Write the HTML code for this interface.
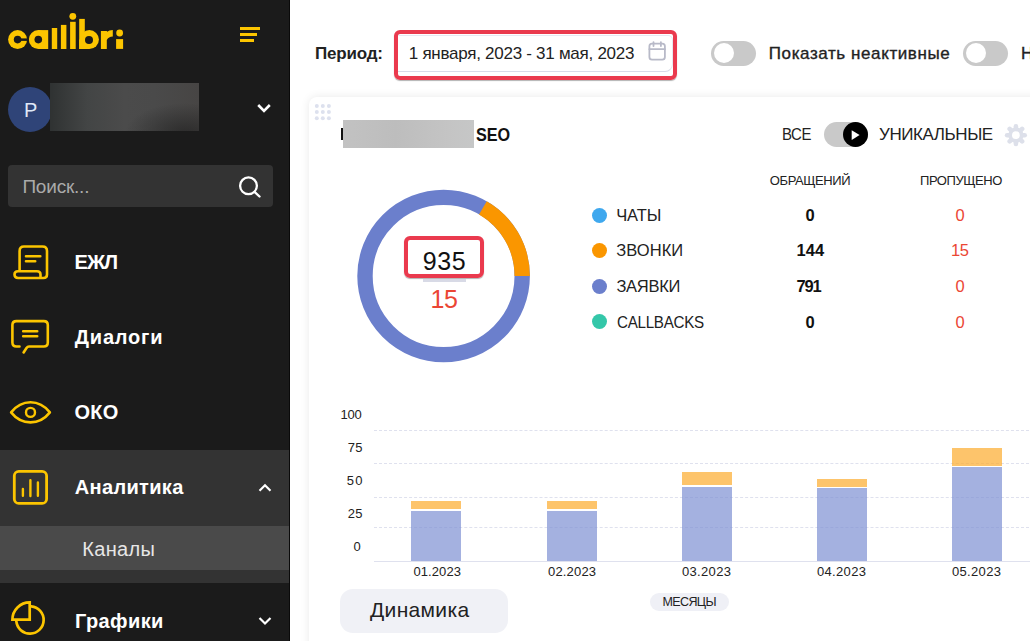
<!DOCTYPE html>
<html><head><meta charset="utf-8">
<style>
*{margin:0;padding:0;box-sizing:border-box}
html,body{width:1030px;height:641px;overflow:hidden;background:#fff;font-family:"Liberation Sans",sans-serif}
.abs{position:absolute}
#sb{position:absolute;left:0;top:0;width:290px;height:641px;background:#1b1b1b}
#sbshadow{position:absolute;left:289px;top:0;width:1px;height:641px;background:#0a0a0a}
.t{position:absolute;white-space:nowrap;line-height:1}
.nav{color:#fff;font-weight:bold;font-size:20px}
.ic{position:absolute;fill:none;stroke:#fcc500;stroke-linecap:round;stroke-linejoin:round}
.tog{position:absolute;border-radius:13px;background:#c9c9c9}
.knob{position:absolute;border-radius:50%;background:#fff}
.lg{position:absolute;width:15px;height:15px;border-radius:50%}
.lt{font-size:16.5px;color:#222}
.num{font-size:16.5px;font-weight:bold;color:#111}
.red{font-size:16.5px;color:#eb4634}
.yl{font-size:13px;color:#222}
.gl{position:absolute;left:374px;width:660px;height:0;border-top:1px dashed #dfe1ee}
.bo{position:absolute;background:rgba(252,171,44,.7)}
.bb{position:absolute;background:rgba(126,144,211,.7)}
.xl{font-size:13px;color:#222}
</style></head><body>
<div id="sb">
  <!-- logo -->
  <svg class="abs" style="left:0;top:0" width="130" height="55" viewBox="0 0 130 55">
    <g fill="#fcc500">
      <circle cx="17.6" cy="39.6" r="9.5"/>
      <circle cx="38.3" cy="39.6" r="9.5"/>
      <rect x="38.3" y="30.1" width="9.9" height="18.9"/>
      <rect x="51.8" y="28" width="5.4" height="21"/>
      <rect x="60.9" y="24.9" width="5.5" height="24.1"/>
      <rect x="70.1" y="21.8" width="5.6" height="27.2"/>
      <circle cx="72.8" cy="16.3" r="3.4"/>
      <rect x="79.2" y="18.9" width="5.6" height="30.1"/>
      <circle cx="89.4" cy="39.6" r="9.5"/>
      <rect x="79.2" y="39.6" width="10" height="9.4"/>
      <path d="M100.9 48.9 V30.9 H106.8 L107.2 31.8 Q109 30.3 112.8 30.1 V36.4 Q108.5 36.4 106.8 40 V48.9 Z"/>
      <circle cx="119.65" cy="33" r="3.4"/>
      <rect x="116.1" y="39.1" width="7" height="9.8"/>
    </g>
    <g fill="#1b1b1b">
      <circle cx="17.6" cy="39.6" r="3.8"/>
      <rect x="19" y="38.4" width="10" height="2.5"/>
      <circle cx="38.3" cy="39.6" r="3.8"/>
      <circle cx="89" cy="39.9" r="4"/>
    </g>
  </svg>
  <!-- hamburger -->
  <div class="abs" style="left:240px;top:27px;width:20px;height:3px;background:#fcc500"></div>
  <div class="abs" style="left:240px;top:33px;width:17px;height:3px;background:#fcc500"></div>
  <div class="abs" style="left:240px;top:39px;width:14px;height:3px;background:#fcc500"></div>
  <!-- user -->
  <div class="abs" style="left:8px;top:87px;width:44px;height:45px;border-radius:50%;background:#2f4478"></div>
  <div id="t1" class="t" style="left:24.0px;top:100px;font-size:20px;color:#dfe8f7;letter-spacing:0.00px">P</div>
  <div class="abs" style="left:50px;top:83px;width:149px;height:48px;background:radial-gradient(ellipse 60px 30px at 135px 50px,rgba(30,30,30,.65),rgba(30,30,30,0)),linear-gradient(90deg,#2f3232 0%,#434545 25%,#4b4b4b 50%,#4a4a4a 70%,#474544 100%)"></div>
  <svg class="abs" style="left:256px;top:102px" width="16" height="14" viewBox="0 0 16 14"><path d="M2.2 3 L8 8.8 L13.8 3" stroke="#fff" stroke-width="2.6" fill="none"/></svg>
  <!-- search -->
  <div class="abs" style="left:8px;top:165px;width:265px;height:42px;border-radius:4px;background:#333"></div>
  <div id="t2" class="t" style="left:22.4px;top:177px;font-size:19px;color:#aaa;letter-spacing:-0.20px">Поиск...</div>
  <svg class="abs" style="left:230px;top:170px" width="40" height="34" viewBox="0 0 40 34"><circle cx="18.5" cy="15.8" r="8.4" stroke="#fff" stroke-width="2.3" fill="none"/><path d="M24.5 21.8 L29.5 26.5" stroke="#fff" stroke-width="2.4" stroke-linecap="round"/></svg>
  <!-- nav icons -->
  <svg class="ic" style="left:5px;top:238px" width="50" height="50" viewBox="0 0 50 50" stroke-width="2.6">
    <path d="M14.6 33.3 V13 Q14.6 8.5 19 8.5 H37.5 Q42 8.5 42 13 V36.5 Q42 40 38.5 40 H13 Q9.5 40 9.5 36.6 Q9.5 33.3 13 33.3 H32 Q35.5 33.3 35.5 36.6 V40"/>
    <path d="M21 18.3 H35.3 M21 23.2 H30.2"/>
  </svg>
  <svg class="ic" style="left:5px;top:312px" width="50" height="50" viewBox="0 0 50 50" stroke-width="2.6">
    <path d="M14.5 34.5 H11.4 Q7.4 34.5 7.4 30.5 V13.1 Q7.4 9.1 11.4 9.1 H38.8 Q42.8 9.1 42.8 13.1 V30.5 Q42.8 34.5 38.8 34.5 H24 Q22.5 34.5 21.5 36 L18.6 40.5"/>
    <path d="M18.2 19.3 H32.2 M18.2 24.3 H32.2"/>
  </svg>
  <svg class="ic" style="left:5px;top:387px" width="50" height="50" viewBox="0 0 50 50" stroke-width="2.6">
    <path d="M6.1 25.4 C12 18 19 15.3 25.5 15.3 C32 15.3 39 18 44.9 25.4 C39 32.8 32 35.4 25.5 35.4 C19 35.4 12 32.8 6.1 25.4Z"/>
    <circle cx="25.5" cy="25.4" r="4.5" stroke-width="2.4"/>
  </svg>
  <!-- nav -->
  <div id="t3" class="t nav" style="left:74.6px;top:252px;letter-spacing:-1.00px">ЕЖЛ</div>
  <div id="t4" class="t nav" style="left:74.8px;top:327px;letter-spacing:0.80px">Диалоги</div>
  <div id="t5" class="t nav" style="left:74.6px;top:402px;letter-spacing:0.20px">ОКО</div>
  <div class="abs" style="left:0;top:450px;width:290px;height:133px;background:#333"></div>
  <svg class="ic" style="left:5px;top:462px" width="50" height="50" viewBox="0 0 50 50" stroke-width="2.8">
    <rect x="9.3" y="9.3" width="32.3" height="32.1" rx="4.5"/>
    <path d="M17.9 27 V33.8 M25.4 18.2 V34.1 M32.9 20.5 V33.8" stroke-width="2.4"/>
  </svg>
  <div id="t6" class="t nav" style="left:74.8px;top:477px;letter-spacing:0.33px">Аналитика</div>
  <svg class="abs" style="left:257.3px;top:479.5px" width="16" height="14" viewBox="0 0 16 14"><path d="M2.5 10.8 L8 5.3 L13.5 10.8" stroke="#fff" stroke-width="2.2" fill="none"/></svg>
  <div class="abs" style="left:0;top:526px;width:290px;height:44px;background:#4a4a4a"></div>
  <div id="t7" class="t" style="left:82.2px;top:539px;font-size:20px;color:#e6e6e6;letter-spacing:0.36px">Каналы</div>
  <svg class="ic" style="left:5px;top:595px" width="50" height="46" viewBox="0 0 50 46" stroke-width="2.7">
    <path d="M26.2 11.3 A13.7 13.7 0 1 1 11.3 26.2"/>
    <path d="M24.7 7.4 V24.7 H7.4 A17.3 17.3 0 0 1 24.7 7.4 Z" stroke-linejoin="miter"/>
  </svg>
  <div id="t8" class="t nav" style="left:75.0px;top:611px;letter-spacing:0.40px">Графики</div>
  <svg class="abs" style="left:257.3px;top:613.5px" width="16" height="14" viewBox="0 0 16 14"><path d="M2.5 4 L8 9.5 L13.5 4" stroke="#fff" stroke-width="2.2" fill="none"/></svg>
</div>
<div id="sbshadow"></div>

<!-- top bar -->
<div id="t9" class="t" style="left:315.0px;top:45px;font-size:17px;font-weight:bold;color:#222;letter-spacing:-0.20px">Период:</div>
<div class="abs" style="left:394px;top:30px;width:283px;height:50px;border:4px solid #ea3a4e;border-radius:6px;box-shadow:0 1px 1px rgba(0,0,0,.3)"></div>
<div class="abs" style="left:398px;top:35px;width:275px;height:37px;border-top:1px solid #e6e8f2;border-bottom:1px solid #d8dbe8;border-right:1px solid #e6e8f0;border-radius:0 5px 8px 0"></div>
<div id="t10" class="t" style="left:408.8px;top:45px;font-size:17px;color:#222;letter-spacing:-0.27px">1 января, 2023 - 31 мая, 2023</div>
<svg class="abs" style="left:646px;top:39px" width="22" height="24" viewBox="0 0 22 24" fill="none" stroke="#b8bac8" stroke-width="1.8">
  <rect x="3.4" y="4.6" width="15.5" height="16.1" rx="2.6"/>
  <path d="M3.4 10.2 H18.9 M7.5 3.1 V7.1 M14.9 3.1 V7.1" stroke-linecap="round"/>
</svg>
<!-- toggles -->
<div id="t11" class="tog" style="left:711px;top:41px;width:45px;height:25px;letter-spacing:0px"></div>
<div class="knob" style="left:713.5px;top:42.7px;width:20.5px;height:20.5px"></div>
<div id="t12" class="t" style="left:768.8px;top:45px;font-size:17px;font-weight:normal;color:#222;letter-spacing:0.59px;-webkit-text-stroke:0.35px #222">Показать неактивные</div>
<div id="t13" class="tog" style="left:963px;top:41px;width:45px;height:25px;letter-spacing:0px"></div>
<div class="knob" style="left:965.5px;top:42.7px;width:20.5px;height:20.5px"></div>
<div id="t14" class="t" style="left:1021.0px;top:45px;font-size:17px;font-weight:normal;color:#222;letter-spacing:0.00px;-webkit-text-stroke:0.35px #222">Н</div>

<!-- card -->
<div class="abs" style="left:308.5px;top:96.5px;width:760px;height:600px;border-radius:8px;background:#fff;box-shadow:0 0 10px rgba(0,0,0,.09)"></div>
<svg class="abs" style="left:312px;top:101px" width="22" height="22" viewBox="0 0 22 22" fill="#dde1ee">
  <circle cx="4.8" cy="4.9" r="2"/><circle cx="10.8" cy="4.9" r="2"/><circle cx="16.9" cy="4.9" r="2"/>
  <circle cx="4.8" cy="10.9" r="2"/><circle cx="10.8" cy="10.9" r="2"/><circle cx="16.9" cy="10.9" r="2"/>
  <circle cx="4.8" cy="17.2" r="2"/><circle cx="10.8" cy="17.2" r="2"/><circle cx="16.9" cy="17.2" r="2"/>
</svg>
<div class="abs" style="left:341px;top:128px;width:2px;height:12px;background:#111"></div>
<div class="abs" style="left:343px;top:120px;width:131px;height:28px;background:linear-gradient(90deg,#c2c2c2,#bdbdbd 40%,#c4c4c4 80%,#c6c7c7)"></div>
<div id="t15" class="t" style="left:476.4px;top:126px;font-size:18px;font-weight:bold;color:#111;letter-spacing:0.00px;transform:scaleX(0.9);transform-origin:0 0">SEO</div>

<div id="t16" class="t lt" style="left:782.0px;top:126px;letter-spacing:-0.50px;font-size:17px;transform:scaleX(0.88);transform-origin:0 0">ВСЕ</div>
<div id="t17" class="tog" style="left:824px;top:122px;width:44px;height:25px;border-radius:12.5px;letter-spacing:0px"></div>
<div class="abs" style="left:843px;top:122px;width:25px;height:25px;border-radius:50%;background:#000"></div>
<svg class="abs" style="left:850px;top:129px" width="12" height="12" viewBox="0 0 12 12"><path d="M1.7 1.3 L9.6 6 L1.7 10.9 Z" fill="#fff"/></svg>
<div id="t18" class="t lt" style="left:879.0px;top:126px;letter-spacing:-0.42px;font-size:17px">УНИКАЛЬНЫЕ</div>
<svg class="abs" style="left:1004px;top:123px" width="24" height="24" viewBox="0 0 24 24">
  <g fill="#dde0ea" transform="translate(11.9 12.2)">
    <circle r="7.6"/>
    <rect x="-2.3" y="-11.1" width="4.6" height="22.2" rx="2.3"/>
    <rect x="-2.3" y="-11.1" width="4.6" height="22.2" rx="2.3" transform="rotate(45)"/>
    <rect x="-2.3" y="-11.1" width="4.6" height="22.2" rx="2.3" transform="rotate(90)"/>
    <rect x="-2.3" y="-11.1" width="4.6" height="22.2" rx="2.3" transform="rotate(135)"/>
  </g>
  <circle cx="11.9" cy="12.2" r="3.85" fill="#fff"/>
</svg>

<div id="t19" class="t" style="left:769.8px;top:174px;font-size:13px;color:#222;letter-spacing:-0.40px">ОБРАЩЕНИЙ</div>
<div id="t20" class="t" style="left:920.0px;top:174px;font-size:13px;color:#222;letter-spacing:-0.43px">ПРОПУЩЕНО</div>

<!-- donut -->
<svg class="abs" style="left:350px;top:182px" width="190" height="190" viewBox="0 0 190 190">
  <g transform="translate(93.6 94)">
    <circle r="78.6" fill="none" stroke="#6b7fcc" stroke-width="15.4"/>
    <path d="M39.3 -68.07 A78.6 78.6 0 0 1 78.6 0" fill="none" stroke="#fa9600" stroke-width="15.4"/>
  </g>
</svg>
<div class="abs" style="left:404.2px;top:236px;width:79.6px;height:41.5px;border:4px solid #ea3a4e;border-radius:6px;box-shadow:0 1px 1px rgba(0,0,0,.3)"></div>
<div class="abs" style="left:423px;top:279px;width:43px;height:2.5px;background:#d8dae6"></div>
<div id="t21" class="t" style="left:422.8px;top:249px;font-size:25px;color:#111;letter-spacing:0.60px">935</div>
<div id="t22" class="t" style="left:430.6px;top:287px;font-size:25px;color:#eb4634;letter-spacing:-0.60px">15</div>

<!-- legend -->
<div class="lg" style="left:592px;top:207.5px;background:#3fa8ee"></div>
<div class="lg" style="left:592px;top:243.3px;background:#fa9600"></div>
<div class="lg" style="left:592px;top:279.4px;background:#6b7fcc"></div>
<div class="lg" style="left:592px;top:314px;background:#34c7a9"></div>
<div id="t23" class="t lt" style="left:616.2px;top:207px;letter-spacing:-0.06px">ЧАТЫ</div>
<div id="t24" class="t lt" style="left:616.2px;top:242px;letter-spacing:0.08px">ЗВОНКИ</div>
<div id="t25" class="t lt" style="left:616.4px;top:278px;letter-spacing:-0.28px">ЗАЯВКИ</div>
<div id="t26" class="t lt" style="left:617.0px;top:314px;letter-spacing:-0.30px;transform:scaleX(0.92);transform-origin:0 0">CALLBACKS</div>
<div id="t27" class="t num" style="left:805.4px;top:207px;letter-spacing:0.00px">0</div>
<div id="t28" class="t num" style="left:796.6px;top:242px;letter-spacing:0.00px">144</div>
<div id="t29" class="t num" style="left:796.6px;top:278px;letter-spacing:-1.20px">791</div>
<div id="t30" class="t num" style="left:805.4px;top:314px;letter-spacing:0.00px">0</div>
<div id="t31" class="t red" style="left:955.4px;top:207px;letter-spacing:0.00px">0</div>
<div id="t32" class="t red" style="left:951.0px;top:242px;letter-spacing:-0.40px">15</div>
<div id="t33" class="t red" style="left:955.4px;top:278px;letter-spacing:0.00px">0</div>
<div id="t34" class="t red" style="left:955.4px;top:314px;letter-spacing:0.00px">0</div>

<!-- chart -->
<div id="t35" class="t yl" style="left:340.6px;top:408px;letter-spacing:-0.30px">100</div>
<div id="t36" class="t yl" style="left:347.8px;top:441px;letter-spacing:0.20px">75</div>
<div id="t37" class="t yl" style="left:346.8px;top:474px;letter-spacing:1.20px">50</div>
<div id="t38" class="t yl" style="left:347.8px;top:507px;letter-spacing:0.20px">25</div>
<div id="t39" class="t yl" style="left:353.6px;top:540px;letter-spacing:0.00px">0</div>
<div class="gl" style="top:430px"></div>
<div class="gl" style="top:463px"></div>
<div class="gl" style="top:497px"></div>
<div class="gl" style="top:527px"></div>
<div class="abs" style="left:374px;top:561px;width:660px;height:1px;background:#dfe1ee"></div>

<div class="bo" style="left:411px;top:500.5px;width:50px;height:8.5px"></div>
<div class="bb" style="left:411px;top:510.6px;width:50px;height:50.4px"></div>
<div class="bo" style="left:547px;top:500.5px;width:50px;height:8.5px"></div>
<div class="bb" style="left:547px;top:510.6px;width:50px;height:50.4px"></div>
<div class="bo" style="left:682px;top:471.5px;width:50px;height:13.5px"></div>
<div class="bb" style="left:682px;top:486.7px;width:50px;height:74.3px"></div>
<div class="bo" style="left:817px;top:479px;width:50px;height:8px"></div>
<div class="bb" style="left:817px;top:487.5px;width:50px;height:73.5px"></div>
<div class="bo" style="left:952px;top:448px;width:50px;height:18px"></div>
<div class="bb" style="left:952px;top:466.8px;width:50px;height:94.2px"></div>

<div id="t40" class="t xl" style="left:413.4px;top:565px;letter-spacing:0.10px">01.2023</div>
<div id="t41" class="t xl" style="left:548.0px;top:565px;letter-spacing:0.17px">02.2023</div>
<div id="t42" class="t xl" style="left:682.0px;top:565px;letter-spacing:0.33px">03.2023</div>
<div id="t43" class="t xl" style="left:817.0px;top:565px;letter-spacing:0.33px">04.2023</div>
<div id="t44" class="t xl" style="left:952.0px;top:565px;letter-spacing:0.33px">05.2023</div>

<div class="abs" style="left:340px;top:589px;width:168px;height:44px;border-radius:13px;background:#f0f1f6"></div>
<div id="t45" class="t" style="left:370.0px;top:599px;font-size:21px;color:#222;letter-spacing:0.34px">Динамика</div>
<div class="abs" style="left:650px;top:593px;width:79px;height:18px;border-radius:9px;background:#eff0f6"></div>
<div id="t46" class="t" style="left:662.6px;top:596px;font-size:12.5px;color:#222;letter-spacing:-0.64px">МЕСЯЦЫ</div>
</body></html>
